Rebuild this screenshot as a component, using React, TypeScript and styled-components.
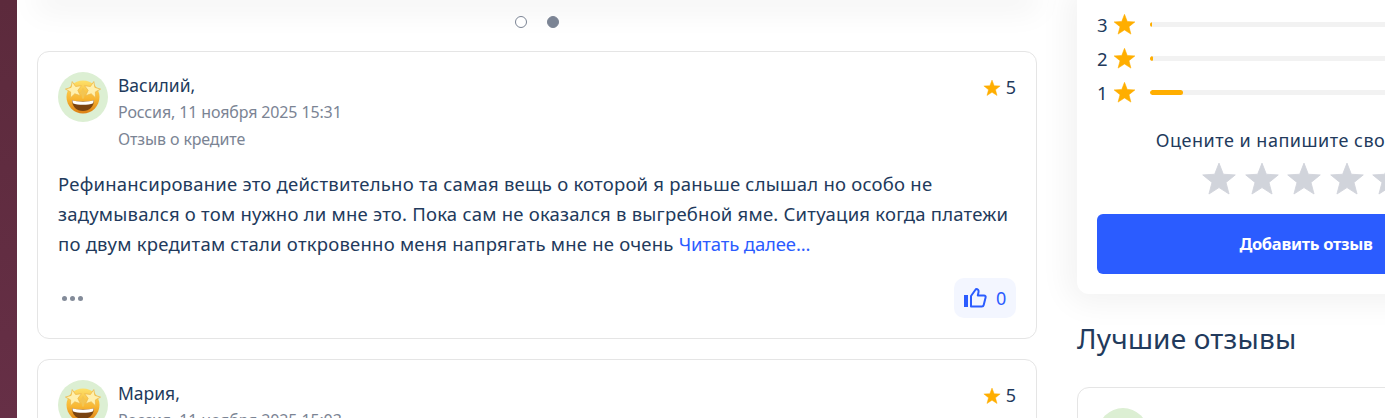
import React from "react";
import styled, { createGlobalStyle } from "styled-components";

const GlobalStyle = createGlobalStyle`
  html, body {
    margin: 0;
    padding: 0;
    height: 418px;
    overflow: hidden;
    background: #fff;
    font-family: "Noto Sans", "Open Sans", sans-serif;
    color: #223a5c;
  }
`;

const Page = styled.div`
  display: flex;
  height: 418px;
  width: 1385px;
  overflow: hidden;
`;

const SideStripe = styled.div`
  flex: 0 0 17px;
  background: linear-gradient(180deg, #5c2a3c 0%, #662f46 100%);
`;

const Content = styled.div`
  flex: 1;
  display: flex;
  gap: 40px;
  padding-left: 20px;
  min-width: 0;
`;

const MainColumn = styled.div`
  flex: 0 0 1000px;
  display: flex;
  flex-direction: column;
`;

const SideColumn = styled.div`
  flex: 0 0 458px;
  display: flex;
  flex-direction: column;
`;

const Carousel = styled.div`
  height: 0;
  margin: 0 10px;
  box-shadow: 0 0 30px 12px rgba(0, 0, 0, 0.05);
`;

const Dots = styled.div`
  display: flex;
  justify-content: center;
  align-items: center;
  gap: 20px;
  height: 12px;
  margin: 16px 1px 23px 0;
`;

const Dot = styled.span<{ $active?: boolean }>`
  width: 12px;
  height: 12px;
  box-sizing: border-box;
  border-radius: 50%;
  border: 1px solid #7b8494;
  background: ${(p) => (p.$active ? "#7b8494" : "#fff")};
`;

const ReviewCard = styled.article`
  flex: none;
  box-sizing: border-box;
  border: 1px solid #e5e5e5;
  border-radius: 12px;
  padding: 20px;
  background: #fff;
  margin-bottom: 20px;
`;

const ReviewHead = styled.div`
  display: flex;
  align-items: flex-start;
  gap: 10px;
`;

const Avatar = styled.div`
  flex: none;
  width: 50px;
  height: 50px;
  border-radius: 50%;
  background: #dcefd3;
  display: flex;
  align-items: center;
  justify-content: center;
`;

const Author = styled.div`
  flex: 1;
  display: flex;
  flex-direction: column;
`;

const Name = styled.div`
  font-size: 17.5px;
  line-height: 27px;
`;

const Meta = styled.div`
  font-size: 16px;
  line-height: 27px;
  letter-spacing: -0.13px;
  color: #7b8494;
`;

const Score = styled.div`
  display: flex;
  align-items: center;
  gap: 5px;
  font-size: 18px;
  line-height: 27px;
  margin-top: 2px;
`;

const ReviewBody = styled.p`
  margin: 16px 0 0;
  font-size: 18.5px;
  line-height: 30px;
  letter-spacing: 0.22px;
`;

const ReadMore = styled.a`
  color: #2b5cff;
  letter-spacing: -0.14px;
`;

const ReviewFoot = styled.div`
  display: flex;
  justify-content: space-between;
  align-items: center;
  margin-top: 19px;
`;

const MoreDots = styled.div`
  display: flex;
  gap: 3px;
  margin-left: 4px;
`;

const MoreDot = styled.span`
  width: 5px;
  height: 5px;
  border-radius: 50%;
  background: #838b99;
`;

const LikeButton = styled.button`
  display: flex;
  align-items: center;
  gap: 9px;
  height: 40px;
  width: 62px;
  box-sizing: border-box;
  padding: 0 9px;
  border: 0;
  border-radius: 10px;
  background: #f3f6ff;
  color: #2b5cff;
  font: inherit;
  font-size: 18px;
`;

const RatingCard = styled.section`
  border-radius: 0 0 12px 12px;
  background: #fff;
  box-shadow: 0 0 30px 10px rgba(0, 0, 0, 0.05);
  padding: 7.5px 20px 20px;
`;

const RatingRow = styled.div`
  display: flex;
  align-items: center;
  height: 34px;
  font-size: 18.5px;
`;

const RowDigit = styled.span`
  width: 16px;
`;

const RowStar = styled.span`
  display: flex;
  width: 37px;
`;

const Track = styled.div`
  flex: 1;
  height: 5px;
  border-radius: 3px;
  background: #f2f2f2;
  overflow: hidden;
`;

const Fill = styled.div`
  height: 100%;
  border-radius: 3px;
  background: #ffae00;
`;

const Prompt = styled.div`
  margin-top: 15px;
  text-align: center;
  font-size: 18px;
  line-height: 30px;
  letter-spacing: 0.5px;
`;

const StarPicker = styled.div`
  display: flex;
  justify-content: center;
  gap: 6.5px;
  margin-top: 6px;
  padding-right: 4px;
`;

const AddButton = styled.button`
  display: block;
  width: 100%;
  height: 60px;
  margin-top: 17px;
  border: 0;
  border-radius: 6px;
  background: #2b5cff;
  color: #fff;
  font: inherit;
  font-size: 16.5px;
  font-weight: 700;
  letter-spacing: -0.3px;
`;

const SectionTitle = styled.h2`
  margin: 25px 0 29px;
  font-size: 28px;
  line-height: 39px;
  letter-spacing: 0.2px;
  font-weight: 400;
`;

const BestCard = styled.div`
  border: 1px solid #e5e5e5;
  border-radius: 12px;
  padding: 20px;
  height: 200px;
`;

// five pointed star as polygon points
const starPoints = (cx: number, cy: number, outer: number, inner: number, tilt = 0) =>
  Array.from({ length: 10 }, (_, i) => {
    const r = i % 2 === 0 ? outer : inner;
    const a = ((-90 + tilt + i * 36) * Math.PI) / 180;
    return `${(cx + r * Math.cos(a)).toFixed(2)},${(cy + r * Math.sin(a)).toFixed(2)}`;
  }).join(" ");

const Star = ({ size, color }: { size: number; color: string }) => (
  <svg width={size} height={size} viewBox="0 0 24 24" aria-hidden="true">
    <polygon fill={color} stroke={color} strokeWidth="0.6" strokeLinejoin="round" points={starPoints(12, 12.8, 11.4, 4.9)} />
  </svg>
);

const StarStruck = ({ id }: { id: string }) => (
  <svg width="36" height="36" viewBox="0 0 36 36" aria-hidden="true">
    <defs>
      <linearGradient id={`${id}-face`} x1="0" y1="0" x2="0" y2="1">
        <stop offset="0%" stopColor="#fde069" />
        <stop offset="55%" stopColor="#f8b632" />
        <stop offset="100%" stopColor="#dc7f14" />
      </linearGradient>
    </defs>
    <circle cx="18" cy="18" r="16.500" fill={`url(#${id}-face)`} />
    <path d="M7 21c4 2 18 2 22 0 0 6.500-4.500 11-11 11S7 27.500 7 21z" fill="#7a4310" />
    <path d="M7.200 21.200c4 1.900 17.600 1.900 21.600 0l-.7 3c-4.500 2.200-15.700 2.200-20.200 0z" fill="#fff" />
    <path d="M18 8.500l3.500 7h-2l-.5 4h-2l-.5-4h-2z" fill="#f3c552" />
    <polygon fill="#fff0ad" stroke="#eeb94a" strokeWidth=".8" strokeLinejoin="round" points={starPoints(9, 11, 8.6, 3.9, -12)} />
    <polygon fill="#fff0ad" stroke="#eeb94a" strokeWidth=".8" strokeLinejoin="round" points={starPoints(27, 11, 8.6, 3.9, 12)} />
  </svg>
);

const ThumbIcon = () => (
  <svg width="24" height="24" viewBox="0 0 24 24" aria-hidden="true">
    <rect x="1" y="9" width="4" height="12" fill="#2b5cff" />
    <path
      fill="none"
      stroke="#2b5cff"
      strokeWidth="2"
      strokeLinejoin="round"
      d="M8 10l5-7c1.900 0 3 1.300 2.500 3.200L14.800 9.500H21c1.300 0 1.900 1 1.600 2l-1.900 7.500c-.2.900-.9 1.500-1.800 1.500H8z"
    />
  </svg>
);

const Review = ({ id, name, meta, body }: { id: string; name: string; meta: string; body?: string }) => (
  <ReviewCard>
    <ReviewHead>
      <Avatar>
        <StarStruck id={id} />
      </Avatar>
      <Author>
        <Name>{name}</Name>
        <Meta>{meta}</Meta>
        <Meta>Отзыв о кредите</Meta>
      </Author>
      <Score>
        <Star size={18} color="#ffae00" />5
      </Score>
    </ReviewHead>
    {body && (
      <>
        <ReviewBody>
          {body} <ReadMore>Читать далее...</ReadMore>
        </ReviewBody>
        <ReviewFoot>
          <MoreDots>
            <MoreDot />
            <MoreDot />
            <MoreDot />
          </MoreDots>
          <LikeButton>
            <ThumbIcon />0
          </LikeButton>
        </ReviewFoot>
      </>
    )}
  </ReviewCard>
);

const rows = [
  { n: 3, pct: 0.5 },
  { n: 2, pct: 0.7 },
  { n: 1, pct: 9 },
];

export default function App() {
  return (
    <>
      <GlobalStyle />
      <Page>
        <SideStripe />
        <Content>
          <MainColumn>
            <Carousel />
            <Dots>
              <Dot />
              <Dot $active />
            </Dots>
            <Review
              id="vasily"
              name="Василий,"
              meta="Россия, 11 ноября 2025 15:31"
              body="Рефинансирование это действительно та самая вещь о которой я раньше слышал но особо не задумывался о том нужно ли мне это. Пока сам не оказался в выгребной яме. Ситуация когда платежи по двум кредитам стали откровенно меня напрягать мне не очень"
            />
            <Review id="maria" name="Мария," meta="Россия, 11 ноября 2025 15:03" />
          </MainColumn>
          <SideColumn>
            <RatingCard>
              {rows.map((r) => (
                <RatingRow key={r.n}>
                  <RowDigit>{r.n}</RowDigit>
                  <RowStar>
                    <Star size={23} color="#ffae00" />
                  </RowStar>
                  <Track>
                    <Fill style={{ width: `${r.pct}%` }} />
                  </Track>
                </RatingRow>
              ))}
              <Prompt>Оцените и напишите свой отзыв</Prompt>
              <StarPicker>
                {[1, 2, 3, 4, 5].map((i) => (
                  <Star key={i} size={36} color="#d1d4db" />
                ))}
              </StarPicker>
              <AddButton>Добавить отзыв</AddButton>
            </RatingCard>
            <SectionTitle>Лучшие отзывы</SectionTitle>
            <BestCard>
              <Avatar />
            </BestCard>
          </SideColumn>
        </Content>
      </Page>
    </>
  );
}
